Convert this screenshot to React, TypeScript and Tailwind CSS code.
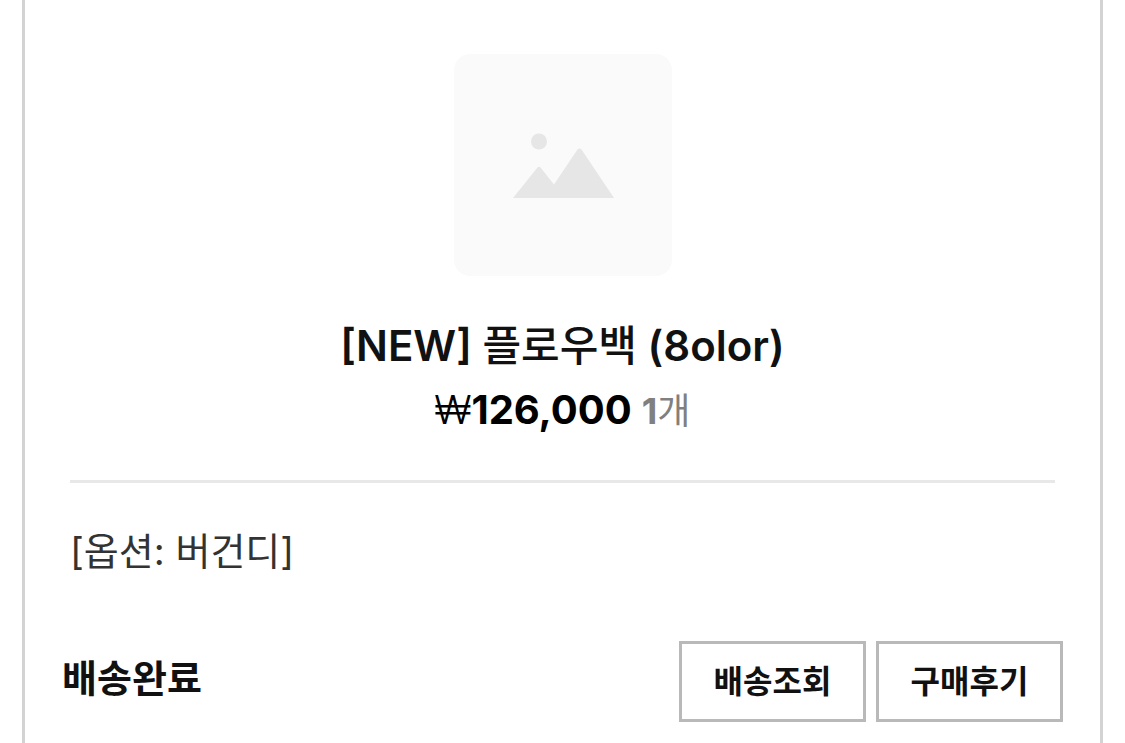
import React from 'react';

const item = {
  tag: '[NEW]',
  name: '플로우백',
  variant: '(8olor)',
  price: '126,000',
  count: '1',
  option: '버건디',
  status: '배송완료',
};

const actions = ['배송조회', '구매후기'];

const Placeholder = () => (
  <div className="flex h-[222px] w-[218px] items-center justify-center rounded-2xl bg-[#fafafa]">
    <svg viewBox="0 0 102 68" className="h-[68px] w-[102px]" fill="#e6e6e6" aria-hidden="true">
      <circle cx="27" cy="10.5" r="8" />
      <path d="M1 67 L25.5 36.5 Q27 35 28.5 36.500 L42 53.5 L65.5 18.5 Q67.5 16.500 69.500 18.500 L102 67 Z" />
    </svg>
  </div>
);

export default function App() {
  return (
    <div className="min-h-screen bg-white px-[22px] font-['Inter','Noto_Sans_CJK_KR',sans-serif] text-[#111]">
      <article className="min-h-screen border-x-3 border-[#d3d3d3] px-[37px] pt-[54px]">
        <div className="flex flex-col items-center">
          <Placeholder />
          <h2 className="mt-[42px] text-[42px] leading-[56px] font-semibold">
            {item.tag} <span className="font-medium">{item.name}</span> {item.variant}
          </h2>
          <p className="mt-2 flex items-baseline gap-[10px] leading-[56px]">
            <strong className="text-[40px] font-bold text-black">
              <span className="font-light">₩</span>
              {item.price}
            </strong>
            <span className="text-[36px] text-[#808080]">
              <b>{item.count}</b>개
            </span>
          </p>
        </div>

        <hr className="mx-2 mt-[41px] border-t-3 border-[#e8e8e8]" />

        <p className="mx-2 mt-10 text-[38px] leading-[56px] text-[#333]">[옵션: {item.option}]</p>

        <div className="mt-[62px] flex items-center justify-between">
          <strong className="pb-2 text-[38px] leading-[56px] font-bold">{item.status}</strong>
          <div className="flex gap-[10px]">
            {actions.map((label) => (
              <button
                key={label}
                type="button"
                className="h-[81px] w-[187px] border-3 border-[#b9b9b9] text-[32px] font-semibold"
              >
                {label}
              </button>
            ))}
          </div>
        </div>
      </article>
    </div>
  );
}
